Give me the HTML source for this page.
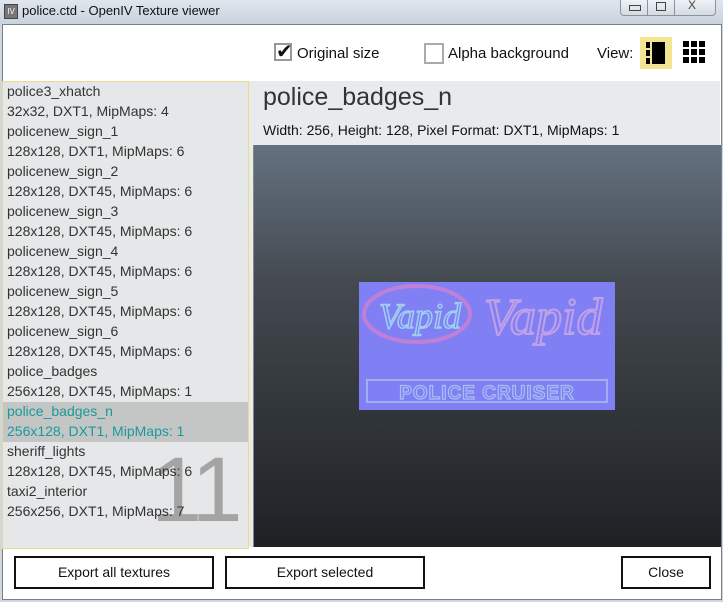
<!DOCTYPE html>
<html><head><style>
body{margin:0;width:723px;height:602px;overflow:hidden;background:#cfd6de;font-family:"Liberation Sans",sans-serif;position:relative}
.abs{position:absolute}
.title{left:0;top:0;width:723px;height:24px;background:linear-gradient(#dfe6ee,#c9d3dd)}
.client{left:2px;top:24px;width:718px;height:574px;background:#fff;border:1px solid #7a8088}
.list{left:2px;top:81px;width:245px;height:466px;background:#e6e7e8;border:1px solid #e8dc8c}
.it{position:absolute;left:0;width:245px;height:40px;font-size:14px;color:#333}
.it div{position:absolute;left:4px;white-space:nowrap}
.it .n{top:1px}.it .d{top:21px}
.sel{background:#c4c5c5;color:#1a9a9a}
.btn{position:absolute;top:556px;height:29px;border:2px solid #111;background:#fff;font-size:14px;color:#111;text-align:center;line-height:29px;box-sizing:border-box;height:33px}
</style></head><body>
<div class="abs title"></div>
<div class="abs" style="left:4px;top:4px;width:12px;height:13px;background:#777;border:1px solid #444;color:#fff;font-size:8px;line-height:13px;text-align:center">IV</div>
<div class="abs" style="left:22px;top:3px;font-size:13px;color:#111">police.ctd - OpenIV Texture viewer</div>
<div class="abs" style="left:620px;top:0;width:94px;height:15px;border:1px solid #8a939c;border-top:none;border-radius:0 0 4px 4px;background:linear-gradient(#eef2f6,#d4dbe2)"></div>
<div class="abs" style="left:647px;top:0;width:1px;height:15px;background:#8a939c"></div>
<div class="abs" style="left:674px;top:0;width:1px;height:15px;background:#8a939c"></div>
<div class="abs" style="left:629px;top:5px;width:10px;height:4px;border:1px solid #444"></div>
<div class="abs" style="left:656px;top:2px;width:8px;height:7px;border:1px solid #444"></div>
<div class="abs" style="left:688px;top:-2px;font-size:12px;color:#444">X</div>
<div class="abs client"></div>
<div class="abs" style="left:274px;top:43px;width:18px;height:18px;border:2px solid #999;box-sizing:border-box;background:#fff"></div>
<div class="abs" style="left:276px;top:39px;font-size:20px;color:#111">✔</div>
<div class="abs" style="left:297px;top:45px;font-size:15px;color:#111">Original size</div>
<div class="abs" style="left:424px;top:43px;width:20px;height:21px;border:2px solid #aaa;box-sizing:border-box;background:#fff"></div>
<div class="abs" style="left:448px;top:45px;font-size:15px;color:#111">Alpha background</div>
<div class="abs" style="left:597px;top:45px;font-size:15px;color:#111">View:</div>
<div class="abs" style="left:640px;top:37px;width:32px;height:32px;background:#f2e490"></div>
<svg class="abs" style="left:640px;top:37px" width="72" height="32">
<rect x="6" y="5" width="4" height="6" fill="#000"/><rect x="6" y="13" width="4" height="6" fill="#000"/><rect x="6" y="21" width="4" height="6" fill="#000"/><rect x="12" y="5" width="13" height="22" fill="#000"/>
<g fill="#000"><rect x="43" y="4" width="6" height="6"/><rect x="51" y="4" width="6" height="6"/><rect x="59" y="4" width="6" height="6"/><rect x="43" y="12" width="6" height="6"/><rect x="51" y="12" width="6" height="6"/><rect x="59" y="12" width="6" height="6"/><rect x="43" y="20" width="6" height="6"/><rect x="51" y="20" width="6" height="6"/><rect x="59" y="20" width="6" height="6"/></g></svg>
<div class="abs list">
<div class="it" style="top:0"><div class="n">police3_xhatch</div><div class="d">32x32, DXT1, MipMaps: 4</div></div>
<div class="it" style="top:40px"><div class="n">policenew_sign_1</div><div class="d">128x128, DXT1, MipMaps: 6</div></div>
<div class="it" style="top:80px"><div class="n">policenew_sign_2</div><div class="d">128x128, DXT45, MipMaps: 6</div></div>
<div class="it" style="top:120px"><div class="n">policenew_sign_3</div><div class="d">128x128, DXT45, MipMaps: 6</div></div>
<div class="it" style="top:160px"><div class="n">policenew_sign_4</div><div class="d">128x128, DXT45, MipMaps: 6</div></div>
<div class="it" style="top:200px"><div class="n">policenew_sign_5</div><div class="d">128x128, DXT45, MipMaps: 6</div></div>
<div class="it" style="top:240px"><div class="n">policenew_sign_6</div><div class="d">128x128, DXT45, MipMaps: 6</div></div>
<div class="it" style="top:280px"><div class="n">police_badges</div><div class="d">256x128, DXT45, MipMaps: 1</div></div>
<div class="it sel" style="top:320px"><div class="n">police_badges_n</div><div class="d">256x128, DXT1, MipMaps: 1</div></div>
<div style="position:absolute;left:148px;top:356px;font-size:92px;color:#a4a4a4;letter-spacing:-4px">11</div>
<div class="it" style="top:360px"><div class="n">sheriff_lights</div><div class="d">128x128, DXT45, MipMaps: 6</div></div>
<div class="it" style="top:400px"><div class="n">taxi2_interior</div><div class="d">256x256, DXT1, MipMaps: 7</div></div>
</div>
<div class="abs" style="left:249px;top:81px;width:471px;height:466px;background:#e8eaec"></div>
<div class="abs" style="left:263px;top:83px;font-size:25px;color:#333">police_badges_n</div>
<div class="abs" style="left:263px;top:122px;font-size:14px;color:#111">Width: 256, Height: 128, Pixel Format: DXT1, MipMaps: 1</div>
<div class="abs" style="left:253px;top:145px;width:467px;height:402px;background:linear-gradient(#647180,#43494f 35%,#1e2124);border-left:1px solid #888"></div>
<div class="abs" style="left:359px;top:282px;width:256px;height:128px;background:#8080f4"></div>
<svg class="abs" style="left:359px;top:282px" width="256" height="128">
<ellipse cx="58" cy="32" rx="53" ry="28" fill="none" stroke="#c080d8" stroke-width="4"/>
<text x="20" y="46" font-family="Liberation Serif" font-style="italic" font-size="36" fill="none" stroke="#a0d0f0" stroke-width="1.5">Vapid</text>
<text x="125" y="52" font-family="Liberation Serif" font-style="italic" font-size="52" fill="none" stroke="#c0a0e8" stroke-width="2">Vapid</text>
<rect x="8" y="98" width="240" height="22" fill="none" stroke="#a0b0f0" stroke-width="2"/>
<text x="128" y="117" text-anchor="middle" font-family="Liberation Sans" font-weight="bold" font-size="19" fill="none" stroke="#a8c0f0" stroke-width="1.2" letter-spacing="1">POLICE CRUISER</text>
</svg>
<div class="btn" style="left:14px;width:200px">Export all textures</div>
<div class="btn" style="left:225px;width:200px">Export selected</div>
<div class="btn" style="left:621px;width:90px">Close</div>
</body></html>
